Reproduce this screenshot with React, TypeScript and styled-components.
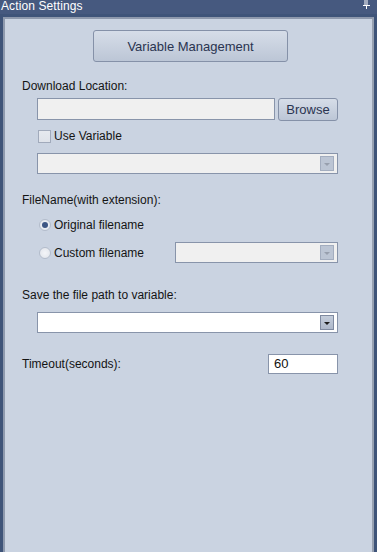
import styled, { createGlobalStyle, css } from 'styled-components';

const GlobalStyle = createGlobalStyle`
  html, body {
    margin: 0;
    padding: 0;
    background: #41567c;
  }
  body {
    font-family: "Liberation Sans", Arial, sans-serif;
    font-size: 12px;
  }
`;

const Window = styled.div`
  width: 377px;
  height: 552px;
  display: flex;
  flex-direction: column;
  background: #3f5479;
  overflow: hidden;
`;

const TitleBar = styled.div`
  height: 14px;
  flex: none;
  display: flex;
  justify-content: space-between;
  align-items: flex-start;
  background: #46597f;
  color: #ffffff;
  overflow: hidden;
`;

const TitleText = styled.span`
  font-size: 12px;
  line-height: 14px;
  margin-top: -1px;
  padding-left: 1px;
  letter-spacing: 0.1px;
`;

const PinWrap = styled.span`
  margin-right: 7px;
  display: flex;
`;

const Frame = styled.div`
  flex: 1;
  display: flex;
  padding: 3px 3px 0 3px;
`;

const Panel = styled.div`
  flex: 1;
  display: flex;
  flex-direction: column;
  background: #cad3e1;
  border: 2px solid #8e99ad;
  border-right-color: #98a1b1;
  border-bottom: none;
  padding: 0 34px 0 17px;
`;

const BigButton = styled.button`
  align-self: flex-start;
  margin: 11px 0 0 71px;
  width: 195px;
  height: 32px;
  border: 1px solid #8591a8;
  border-radius: 3px;
  background: linear-gradient(#d6dde8, #bcc6d6);
  color: #2a3450;
  font-family: "Liberation Sans", Arial, sans-serif;
  font-size: 13px;
  padding: 0;
`;

const Label = styled.div<{ $top: number }>`
  margin-top: ${(p) => p.$top}px;
  height: 14px;
  line-height: 14px;
  color: #141414;
  white-space: nowrap;
`;

const Row = styled.div<{ $top: number; $indent?: number; $height: number }>`
  margin-top: ${(p) => p.$top}px;
  margin-left: ${(p) => p.$indent ?? 15}px;
  height: ${(p) => p.$height}px;
  display: flex;
  align-items: center;
`;

const TextField = styled.div`
  box-sizing: border-box;
  height: 100%;
  flex: 1;
  background: #f0f0f0;
  border: 1px solid #8894aa;
`;

const SmallButton = styled.button`
  box-sizing: border-box;
  margin-left: 3px;
  width: 60px;
  height: 23px;
  align-self: flex-start;
  border: 1px solid #8591a8;
  border-radius: 3px;
  background: linear-gradient(#d6dde8, #bcc6d6);
  color: #2a3450;
  font-family: "Liberation Sans", Arial, sans-serif;
  font-size: 13px;
  padding: 0;
`;

const Combo = styled.div<{ $white?: boolean; $width?: number }>`
  box-sizing: border-box;
  height: 100%;
  ${(p) => (p.$width ? css`width: ${p.$width}px;` : css`flex: 1;`)}
  margin-left: auto;
  display: flex;
  justify-content: flex-end;
  align-items: center;
  padding-right: 3px;
  background: ${(p) => (p.$white ? '#ffffff' : '#f0f0f0')};
  border: 1px solid #8894aa;
`;

const ComboArrow = styled.div<{ $enabled?: boolean }>`
  box-sizing: border-box;
  width: 14px;
  height: 15px;
  display: flex;
  align-items: center;
  justify-content: center;
  border: 1px solid ${(p) => (p.$enabled ? '#7f8aa0' : '#a3adbf')};
  background: ${(p) =>
    p.$enabled ? 'linear-gradient(#c4cddb, #aeb8ca)' : '#bcc5d4'};
  &::after {
    content: '';
    margin-top: 1px;
    border-left: 3px solid transparent;
    border-right: 3px solid transparent;
    border-top: 3px solid ${(p) => (p.$enabled ? '#1b1b1b' : '#979fad')};
  }
`;

const TimeoutField = styled.div`
  box-sizing: border-box;
  width: 70px;
  height: 100%;
  margin-left: auto;
  background: #ffffff;
  border: 1px solid #8894aa;
  color: #111;
  font-size: 13px;
  line-height: 18px;
  padding-left: 5px;
`;

const CheckBox = styled.span`
  box-sizing: border-box;
  width: 13px;
  height: 13px;
  margin-left: 1px;
  border: 1px solid #a1aabb;
  background: linear-gradient(#e6e9ef, #dfe3ea);
`;

const Radio = styled.span<{ $checked?: boolean }>`
  box-sizing: border-box;
  width: 12px;
  height: 12px;
  margin-left: 2px;
  border-radius: 50%;
  border: 1px solid #b3bccb;
  background: radial-gradient(circle, #f4f5f8 0, #dfe3ea 100%);
  display: flex;
  align-items: center;
  justify-content: center;
  &::after {
    content: '';
    display: ${(p) => (p.$checked ? 'block' : 'none')};
    width: 6px;
    height: 6px;
    border-radius: 50%;
    background: #3d5684;
  }
`;

const OptionText = styled.span`
  margin-left: 3px;
  color: #141414;
  line-height: 14px;
  white-space: nowrap;
`;

const TimeoutLabel = styled.span`
  color: #141414;
  white-space: nowrap;
`;

function Pin() {
  return (
    <svg width="7" height="9" viewBox="0 0 7 9">
      <rect x="1.5" y="0" width="1" height="5" fill="#fff" />
      <rect x="3.5" y="0" width="1" height="5" fill="#fff" />
      <rect x="0" y="5" width="7" height="1" fill="#fff" />
      <rect x="3" y="6" width="1" height="3" fill="#fff" />
    </svg>
  );
}

export default function App() {
  return (
    <Window>
      <GlobalStyle />
      <TitleBar>
        <TitleText>Action Settings</TitleText>
        <PinWrap>
          <Pin />
        </PinWrap>
      </TitleBar>
      <Frame>
        <Panel>
          <BigButton>Variable Management</BigButton>

          <Label $top={17}>Download Location:</Label>
          <Row $top={5} $height={22}>
            <TextField />
            <SmallButton>Browse</SmallButton>
          </Row>
          <Row $top={9} $height={14}>
            <CheckBox />
            <OptionText>Use Variable</OptionText>
          </Row>
          <Row $top={10} $height={21}>
            <Combo>
              <ComboArrow />
            </Combo>
          </Row>

          <Label $top={19}>FileName(with extension):</Label>
          <Row $top={11} $height={14}>
            <Radio $checked />
            <OptionText>Original filename</OptionText>
          </Row>
          <Row $top={10} $height={21}>
            <Radio />
            <OptionText>Custom filename</OptionText>
            <Combo $width={163}>
              <ComboArrow />
            </Combo>
          </Row>

          <Label $top={25}>Save the file path to variable:</Label>
          <Row $top={10} $height={21}>
            <Combo $white>
              <ComboArrow $enabled />
            </Combo>
          </Row>

          <Row $top={21} $indent={0} $height={20}>
            <TimeoutLabel>Timeout(seconds):</TimeoutLabel>
            <TimeoutField>60</TimeoutField>
          </Row>
        </Panel>
      </Frame>
    </Window>
  );
}
